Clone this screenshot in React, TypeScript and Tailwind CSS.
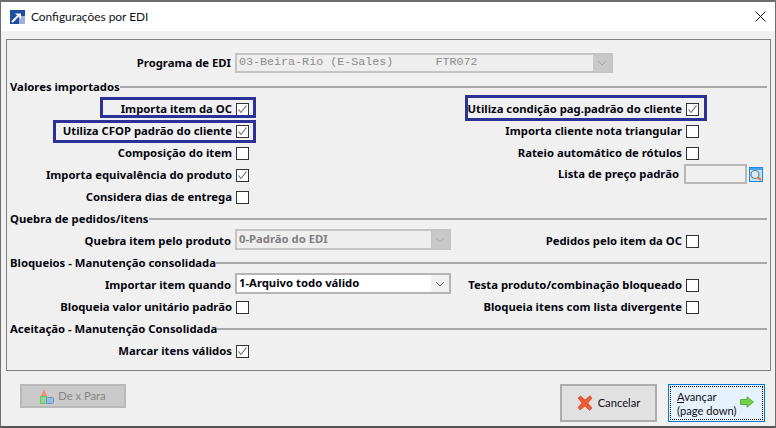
const labelFont = "font-['Noto_Sans','DejaVu_Sans',sans-serif] font-bold text-[11.3px] text-[#05050f] whitespace-nowrap";
const uiFont = "font-['Lato','Open_Sans',sans-serif]";

function Checkbox({ checked }: { checked?: boolean }) {
  return (
    <span className="w-[13px] h-[13px] border border-[#333333] bg-white flex items-center justify-center shrink-0">
      {checked && (
        <svg width="11" height="11" viewBox="0 0 11 11">
          <path d="M1.5 5.5 L4 8.5 L9.5 1.5" fill="none" stroke="#666666" strokeWidth="1.1" />
        </svg>
      )}
    </span>
  );
}

function CheckField({ label, checked }: { label: string; checked?: boolean }) {
  return (
    <div className="flex items-center justify-end gap-[4px] h-full">
      <span className={labelFont}>{label}</span>
      <Checkbox checked={checked} />
    </div>
  );
}

function Row({ left, right }: { left?: React.ReactNode; right?: React.ReactNode }) {
  return (
    <div className="flex h-[22px]">
      <div className="w-[242px] shrink-0 h-full">{left}</div>
      <div className="w-[450px] shrink-0 h-full">{right}</div>
    </div>
  );
}

function Section({ title }: { title: string }) {
  return (
    <div className="flex items-center h-[22px] px-[3px]">
      <span className={labelFont}>{title}</span>
      <div className="flex-1 h-[2px] bg-[#a8a8a8]" />
    </div>
  );
}

function Combo({ className, text, disabled, mono }: { className: string; text: string; disabled?: boolean; mono?: boolean }) {
  return (
    <div className={className + " border-2 flex shrink-0 " + (disabled ? "border-[#c4c4c4] bg-[#c8c8c8]" : "border-[#b4b4b4] bg-[#f0f0f0]")}>
      <div className={"flex-1 flex items-center pl-[2px] whitespace-pre " + (disabled ? "bg-[#eeeeee]" : "bg-white") + " " +
        (mono ? "font-['Liberation_Mono',monospace] text-[11.7px] text-[#8c8c8c]" : "font-['Noto_Sans',sans-serif] font-bold text-[11.3px] " + (disabled ? "text-[#808080]" : "text-[#05050f]"))}>
        {text}
      </div>
      <div className="w-[18px] flex items-center justify-center">
        <svg width="10" height="6" viewBox="0 0 10 6">
          <path d="M1 1 L5 5 L9 1" fill="none" stroke={disabled ? "#a8a8a8" : "#606060"} strokeWidth="1" />
        </svg>
      </div>
    </div>
  );
}

// label on the left, combo after it, optional checkbox field closing the row
function ComboRow({ label, combo, right }: { label: string; combo: React.ReactNode; right?: React.ReactNode }) {
  return (
    <div className="flex w-[692px] h-[22px]">
      <div className="w-[224px] shrink-0 h-full flex items-center justify-end">
        <span className={labelFont}>{label}</span>
      </div>
      <div className="ml-[4px]">{combo}</div>
      <div className="flex-1 h-full">{right}</div>
    </div>
  );
}

export default function App() {
  return (
    <div className="w-[776px] h-[428px] flex flex-col bg-[#f0f0f0] border-x border-t-2 border-b-2 border-x-[#6e6e6e] border-t-[#6e6e6e] border-b-[#555555] overflow-hidden">
      {/* title bar */}
      <div className="h-[29px] bg-white flex items-center px-[9px] shrink-0">
        <svg width="15" height="14" viewBox="0 0 15 14">
          <rect width="15" height="14" fill="#1d4f9e" />
          <rect x="9" y="6" width="6" height="8" fill="#9db4d8" />
          <path d="M2 12 L8 6" stroke="#ffffff" strokeWidth="2" />
          <path d="M5 3.5 L11 3.5 L11 9 Z" fill="#ffffff" />
        </svg>
        <span className={"ml-[6px] text-[11.9px] text-[#101018] " + uiFont}>Configurações por EDI</span>
        <svg className="ml-auto" width="11" height="11" viewBox="0 0 11 11">
          <path d="M0.5 0.5 L10.5 10.5 M10.5 0.5 L0.5 10.5" stroke="#111111" strokeWidth="1" />
        </svg>
      </div>

      <div className="flex-1 flex flex-col px-[5px] pt-[8px]">
        {/* main panel */}
        <div className="relative h-[332px] w-[765px] border border-[#808080] pt-[12px] shrink-0">
          <div className="mb-[2px]">
            <ComboRow
              label="Programa de EDI"
              combo={<Combo className="w-[378px] h-[20px] mt-[1px]" text={"03-Beira-Rio (E-Sales)      FTR072"} disabled mono />}
            />
          </div>
          <Section title="Valores importados" />
          <Row left={<CheckField label="Importa item da OC" checked />} right={<CheckField label="Utiliza condição pag.padrão do cliente" checked />} />
          <Row left={<CheckField label="Utiliza CFOP padrão do cliente" checked />} right={<CheckField label="Importa cliente nota triangular" />} />
          <Row left={<CheckField label="Composição do item" />} right={<CheckField label="Rateio automático de rótulos" />} />
          <Row
            left={<CheckField label="Importa equivalência do produto" checked />}
            right={
              <div className="flex items-center justify-end h-full w-[514px] -mt-[1px]">
                <span className={labelFont}>Lista de preço padrão</span>
                <div className="w-[63px] h-[20px] border-2 border-[#b8b8b8] ml-[5px] mr-[2px] shrink-0" />
                <svg width="14" height="15" viewBox="0 0 14 15" className="shrink-0">
                  <rect x="0.5" y="0.5" width="13" height="14" fill="#bfe3fb" stroke="#1e88e5" />
                  <rect x="1" y="1" width="12" height="2" fill="#4aa3ec" />
                  <circle cx="6" cy="7.5" r="4" fill="#dbe9f4" stroke="#6a7f96" strokeWidth="1.2" />
                  <path d="M9 10.5 L12 13" stroke="#e8803a" strokeWidth="2.4" />
                </svg>
              </div>
            }
          />
          <Row left={<CheckField label="Considera dias de entrega" />} />
          <Section title="Quebra de pedidos/itens" />
          <ComboRow
            label="Quebra item pelo produto"
            combo={<Combo className="w-[216px] h-[21px] -mt-[1px]" text="0-Padrão do EDI" disabled />}
            right={<CheckField label="Pedidos pelo item da OC" />}
          />
          <Section title="Bloqueios - Manutenção consolidada" />
          <ComboRow
            label="Importar item quando"
            combo={<Combo className="w-[216px] h-[21px] -mt-[1px]" text="1-Arquivo todo válido" />}
            right={<CheckField label="Testa produto/combinação bloqueado" />}
          />
          <Row left={<CheckField label="Bloqueia valor unitário padrão" />} right={<CheckField label="Bloqueia itens com lista divergente" />} />
          <Section title="Aceitação - Manutenção Consolidada" />
          <Row left={<CheckField label="Marcar itens válidos" checked />} />

          {/* blue highlight boxes drawn over the form */}
          <div className="absolute left-[93px] top-[57px] w-[156px] h-[21px] border-[3px] border-[#2b3196]" />
          <div className="absolute left-[46px] top-[80px] w-[203px] h-[23px] border-[3px] border-[#2b3196]" />
          <div className="absolute left-[458px] top-[55px] w-[242px] h-[26px] border-[3px] border-[#2b3196]" />
        </div>

        {/* footer buttons */}
        <div className={"flex items-start mt-[13px] pl-[14px] pr-[5px] text-[11.2px] " + uiFont}>
          <button className="w-[106px] h-[24px] bg-[#cacaca] border-2 border-[#b9b9b9] flex items-center justify-center gap-[4px] text-[#858585]">
            <svg width="14" height="15" viewBox="0 0 14 15">
              <path d="M4 0.5 L7 7 L1 7 Z" fill="#f08a78" />
              <rect x="0.5" y="7.5" width="6" height="7" fill="#8fd88f" stroke="#6bbf6b" />
              <rect x="6.5" y="8.5" width="7" height="6" rx="1" fill="#9ab8e8" stroke="#6f90c8" />
            </svg>
            De x Para
          </button>
          <button className="ml-auto w-[97px] h-[38px] bg-[#e1e1e1] border-2 border-[#adadad] flex items-center justify-center gap-[5px] text-[#101018]">
            <svg width="16" height="16" viewBox="0 0 16 16">
              <path d="M1 3 L3.5 1 L8 5 L13 0.8 L15 3 L10.8 8 L15 13 L12.5 15.5 L8 11 L3 15 L1 12.5 L5 8 Z" fill="#ef5a32" stroke="#c9391c" strokeWidth="0.6" />
            </svg>
            Cancelar
          </button>
          <button className="ml-[11px] w-[97px] h-[38px] bg-[#e5f1fb] border border-[#0078d7] p-[1px] text-[#101018]">
            <div className="w-full h-full border border-dotted border-black flex items-center pl-[6px] pr-[8px]">
              <span className="text-left leading-[14px] whitespace-nowrap mt-[1px]"><u>A</u>vançar<br />(page down)</span>
              <svg className="ml-auto -mt-[3px]" width="14" height="12" viewBox="0 0 14 12">
                <path d="M0.5 3.5 L7 3.5 L7 0.7 L13.5 6 L7 11.3 L7 8.5 L0.5 8.5 Z" fill="#6fd34a" stroke="#4f9e3a" strokeWidth="0.8" />
              </svg>
            </div>
          </button>
        </div>
      </div>
    </div>
  );
}
